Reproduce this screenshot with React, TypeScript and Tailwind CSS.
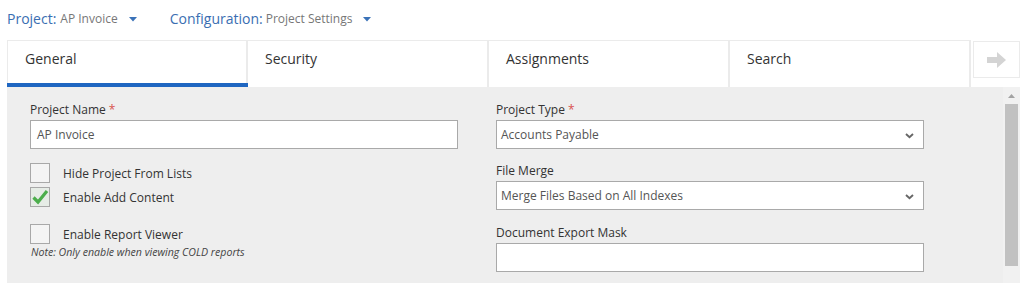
import React from 'react';

const Caret: React.FC = () => (
  <svg width="8" height="5" viewBox="0 0 8 5" className="ml-[11px] mt-[2px]">
    <path d="M0 0h8L4 4.5z" fill="#3a72b8" />
  </svg>
);

const Chevron: React.FC = () => (
  <svg width="9" height="6" viewBox="0 0 9 6" className="absolute right-[9px] top-[12px]">
    <path d="M1 1l3.5 3.2L8 1" fill="none" stroke="#666" strokeWidth="1.9" />
  </svg>
);

const Required: React.FC = () => <span className="ml-[3px] text-[#d9534f]">*</span>;

const Checkbox: React.FC<{ checked?: boolean }> = ({ checked }) => (
  <div className={`relative h-[20px] w-[20px] border border-[#a8a8a8] ${checked ? 'bg-[#e6ece6]' : 'bg-[#f4f4f4]'}`}>
    {checked && (
      <svg width="18" height="16" viewBox="0 0 18 16" className="absolute left-[0px] top-[1px]">
        <path d="M2.5 8.5l4.5 4.5 9-11" fill="none" stroke="#4cae4c" strokeWidth="3.2" />
      </svg>
    )}
  </div>
);

const tabs = ['General', 'Security', 'Assignments', 'Search'];

export default function App() {
  return (
    <div className="h-[283px] w-[1031px] overflow-hidden bg-white font-['Open_Sans',sans-serif] text-[#333]">
      {/* breadcrumb bar */}
      <div className="flex h-[40px] items-center pb-[3px] pl-[7px]">
        <div className="flex items-center">
          <span className="text-[14px] text-[#3a6eb2]">Project:</span>
          <span className="ml-[4px] text-[12px] text-[#777]">AP Invoice</span>
          <Caret />
        </div>
        <div className="ml-[33px] flex items-center">
          <span className="text-[14px] text-[#3a6eb2]">Configuration:</span>
          <span className="ml-[3px] text-[12px] text-[#777]">Project Settings</span>
          <Caret />
        </div>
      </div>

      {/* tabs */}
      <div className="flex h-[47px] pl-[7px]">
        {tabs.map((t, i) => (
          <div
            key={t}
            className={`relative w-[241px] border-t border-r-2 border-[#ebebeb] pl-[17px] pt-[7px] text-[14px] font-medium text-[#333] ${i === 0 ? 'border-l' : ''}`}
          >
            {t}
            {i === 0 && <div className="absolute bottom-0 left-[-1px] right-[-2px] h-[4px] bg-[#1f66c1]" />}
          </div>
        ))}
        <div className="ml-[2px] mt-[1px] flex h-[37px] w-[47px] items-center justify-center border border-[#ebebeb]">
          <svg width="19" height="16" viewBox="0 0 19 16">
            <path d="M0 5h10V0l9 8-9 8v-5H0z" fill="#d4d4d4" />
          </svg>
        </div>
      </div>

      {/* panel */}
      <div className="ml-[7px] flex h-[196px] w-[1013px] bg-[#eeeeee]">
        <div className="flex flex-1 gap-[38px] pl-[23px] pt-[14px]">
          {/* left column */}
          <div className="w-[428px]">
            <div className="text-[12px] leading-[18px]">
              Project Name<Required />
            </div>
            <div className="mt-[1px] flex h-[29px] items-center border border-[#a9a9a9] bg-white pl-[6px] pt-[1px] text-[12px] text-[#555]">
              AP Invoice
            </div>
            <div className="mt-[14px] flex items-center">
              <Checkbox />
              <span className="ml-[13px] pt-[1px] text-[12px]">Hide Project From Lists</span>
            </div>
            <div className="mt-[4px] flex items-center">
              <Checkbox checked />
              <span className="ml-[13px] pt-[1px] text-[12px]">Enable Add Content</span>
            </div>
            <div className="mt-[17px] flex items-center">
              <Checkbox />
              <span className="ml-[13px] pt-[1px] text-[12px]">Enable Report Viewer</span>
            </div>
            <div className="mt-[1px] pl-[1px] text-[10.6px] italic leading-[14px] text-[#444]">
              Note: Only enable when viewing COLD reports
            </div>
          </div>

          {/* right column */}
          <div className="w-[428px]">
            <div className="text-[12px] leading-[18px]">
              Project Type<Required />
            </div>
            <div className="relative mt-[1px] flex h-[29px] items-center border border-[#a9a9a9] bg-white pl-[4px] pt-[1px] text-[12px] text-[#555]">
              Accounts Payable
              <Chevron />
            </div>
            <div className="mt-[13px] text-[12px] leading-[18px]">File Merge</div>
            <div className="relative mt-[1px] flex h-[29px] items-center border border-[#a9a9a9] bg-white pl-[4px] pt-[1px] text-[12px] text-[#555]">
              Merge Files Based on All Indexes
              <Chevron />
            </div>
            <div className="mt-[14px] text-[12px] leading-[18px]">Document Export Mask</div>
            <div className="mt-[1px] h-[29px] border border-[#a9a9a9] bg-white" />
          </div>
        </div>

        {/* scrollbar */}
        <div className="flex w-[17px] flex-col items-center bg-[#f1f1f1]">
          <svg width="7" height="4" viewBox="0 0 7 4" className="mt-[7px]">
            <path d="M0 4L3.5 0 7 4z" fill="#a3a3a3" />
          </svg>
          <div className="mt-[6px] h-[162px] w-[13px] bg-[#c1c1c1]" />
        </div>
      </div>
    </div>
  );
}
